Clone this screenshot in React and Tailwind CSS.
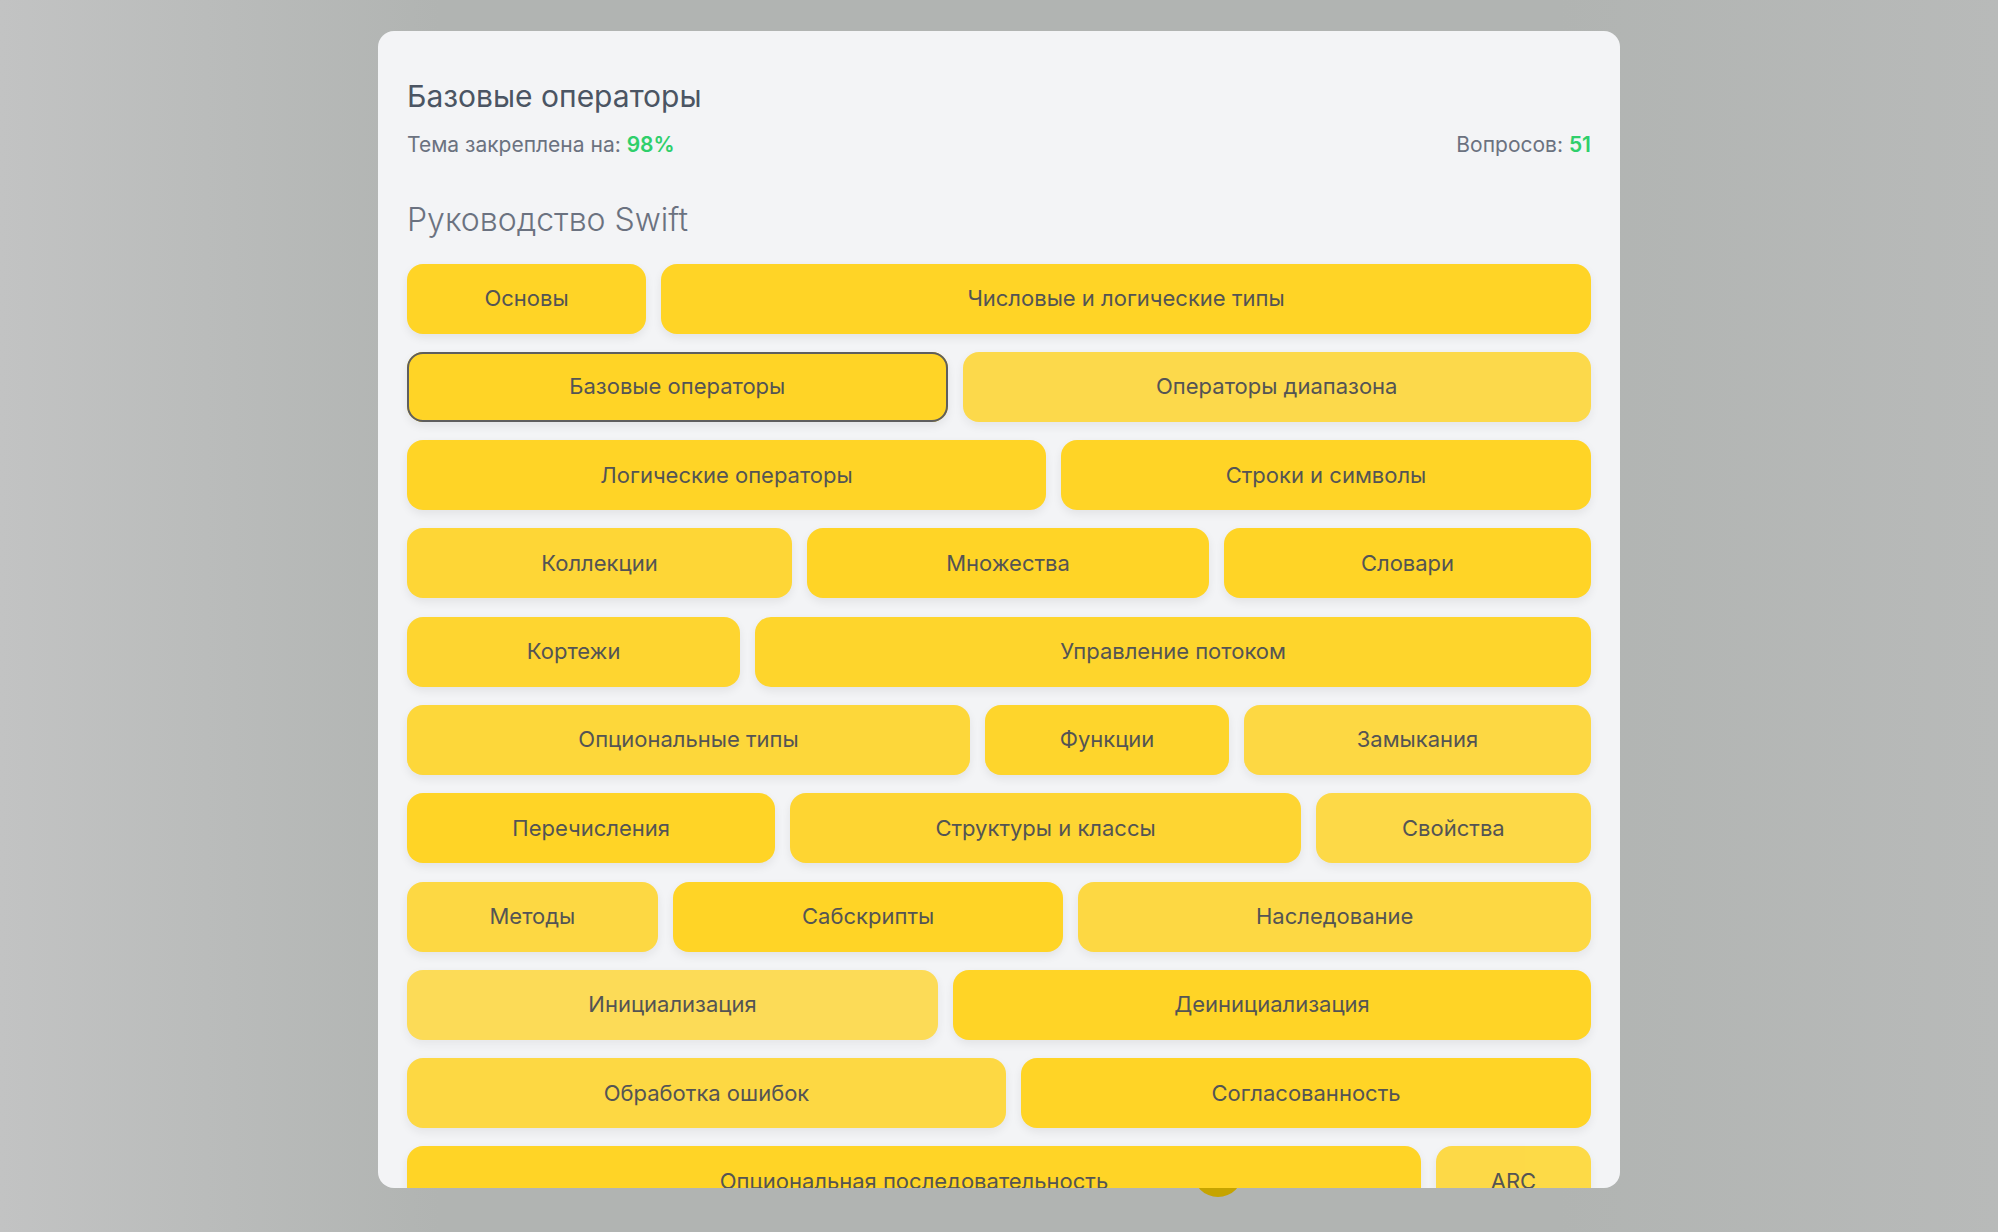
import React from "react";

const rows = [
  [
    { t: "Основы", w: 239, o: 1 },
    { t: "Числовые и логические типы", w: 930, o: 1 },
  ],
  [
    { t: "Базовые операторы", w: 541, o: 1, sel: true },
    { t: "Операторы диапазона", w: 629, o: 0.82 },
  ],
  [
    { t: "Логические операторы", w: 639, o: 1 },
    { t: "Строки и символы", w: 530, o: 1 },
  ],
  [
    { t: "Коллекции", w: 385, o: 0.92 },
    { t: "Множества", w: 402, o: 1 },
    { t: "Словари", w: 367, o: 1 },
  ],
  [
    { t: "Кортежи", w: 333, o: 0.95 },
    { t: "Управление потоком", w: 835, o: 0.97 },
  ],
  [
    { t: "Опциональные типы", w: 563, o: 0.9 },
    { t: "Функции", w: 244, o: 0.97 },
    { t: "Замыкания", w: 347, o: 0.86 },
  ],
  [
    { t: "Перечисления", w: 368, o: 1 },
    { t: "Структуры и классы", w: 510, o: 0.94 },
    { t: "Свойства", w: 275, o: 0.84 },
  ],
  [
    { t: "Методы", w: 251, o: 0.86 },
    { t: "Сабскрипты", w: 391, o: 1 },
    { t: "Наследование", w: 513, o: 0.86 },
  ],
  [
    { t: "Инициализация", w: 531, o: 0.76 },
    { t: "Деинициализация", w: 638, o: 1 },
  ],
  [
    { t: "Обработка ошибок", w: 599, o: 0.86 },
    { t: "Согласованность", w: 570, o: 1 },
  ],
  [
    { t: "Опциональная последовательность", w: 1014, o: 1 },
    { t: "ARC", w: 155, o: 0.84 },
  ],
];

function Chip({ t, w, o, sel }) {
  return (
    <div
      className="relative basis-0 h-[70px] min-w-0"
      style={{ flexGrow: w }}
    >
      <div
        className="absolute inset-0 rounded-2xl bg-[#ffd426] shadow-[0_4px_10px_rgba(0,0,0,0.07)]"
        style={{ opacity: o }}
      />
      <div
        className={
          "relative h-full flex items-center justify-center rounded-2xl text-[22px] text-[#545454] whitespace-nowrap " +
          (sel ? "border-2 border-[#5e5e5e]" : "")
        }
      >
        {t}
      </div>
    </div>
  );
}

export default function App() {
  return (
    <div
      className="relative w-full h-[1232px] overflow-hidden bg-[linear-gradient(to_right,#c2c3c3_0%,#b1b4b2_22%,#b1b4b2_78%,#b8bab9_100%)]"
      style={{ fontFamily: "Inter, 'Noto Sans', sans-serif" }}
    >
      <div className="absolute left-[1193px] top-[1147px] w-[50px] h-[50px] rounded-full bg-[#c6a400]" />
      <div className="relative mx-auto mt-[31px] w-[1242px] h-[1157px] rounded-2xl bg-[#f3f4f6] overflow-hidden px-[29px] pt-[50px]">
        <div className="text-[30px] leading-[30px] text-[#4b5563]">
          Базовые операторы
        </div>
        <div className="mt-[23px] flex justify-between text-[21px] leading-[21px] text-[#6b7280]">
          <div>
            Тема закреплена на:{" "}
            <span className="font-semibold text-[#2fcf6b]">98%</span>
          </div>
          <div>
            Вопросов: <span className="font-semibold text-[#2fcf6b]">51</span>
          </div>
        </div>
        <div className="mt-[49px] text-[32px] leading-[32px] font-light text-[#6b7280]">
          Руководство Swift
        </div>
        <div className="mt-[27.5px] flex flex-col gap-y-[18.3px]">
          {rows.map((r, i) => (
            <div key={i} className="flex gap-x-[15px]">
              {r.map((c) => (
                <Chip key={c.t} {...c} />
              ))}
            </div>
          ))}
        </div>
      </div>
    </div>
  );
}
